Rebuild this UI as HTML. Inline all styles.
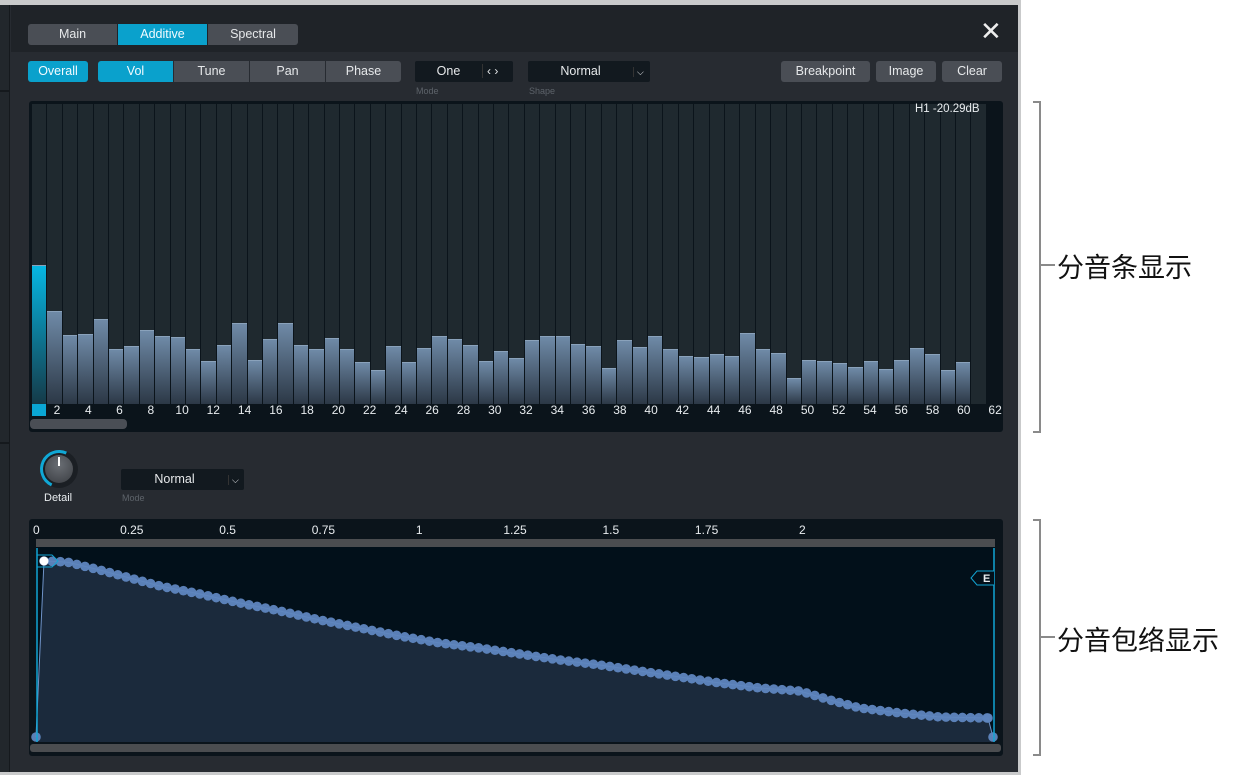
<!DOCTYPE html>
<html><head><meta charset="utf-8"><style>
*{margin:0;padding:0;box-sizing:border-box}
body{width:1237px;height:777px;background:#fff;position:relative;overflow:hidden;font-family:"Liberation Sans",Arial,sans-serif;color:#e8ecef;font-size:12px}
.win{position:absolute;left:0;top:0;width:1021px;height:775px;background:#c9cacb}
.inner{position:absolute;left:0;top:5px;width:1018px;height:767px;background:#272b31}
.strip{position:absolute;left:0;top:0;width:10px;height:767px;background:#22272c;border-right:1px solid #15191d}
.hdr{position:absolute;left:11px;top:0;right:0;height:47px;background:#1f2328}
.btn{position:absolute;height:21px;line-height:21px;text-align:center;background:#4a4e55;color:#e6e8ea;font-size:12.5px;border-radius:2px}
.on{background:#0aa1cc;color:#f2fbff}
.dd{position:absolute;height:21px;line-height:21px;text-align:center;background:#12191f;color:#e6e8ea;font-size:12.5px;border-radius:2px}
.lbl{position:absolute;font-size:9px;color:#5d636a}
.panel{position:absolute;background:#0b141b;border-radius:3px}
.ann{position:absolute;font-family:"Liberation Sans","Noto Sans CJK SC",sans-serif;font-size:27px;color:#111}
.br{position:absolute;border:2px solid #8a8a8a;border-left:none;width:8px}
.tick{position:absolute;height:2px;background:#8a8a8a;width:14px}
</style></head><body>
<div class="win"><div class="inner">
<div class="strip"></div>
<div style="position:absolute;left:0;top:85px;width:10px;height:2px;background:#15191d"></div>
<div style="position:absolute;left:0;top:437px;width:10px;height:2px;background:#15191d"></div>
<div class="hdr"></div>
</div></div>
<div class="btn" style="left:28px;top:24px;width:89px;border-radius:3px 0 0 3px">Main</div>
<div class="btn on" style="left:118px;top:24px;width:89px;border-radius:0">Additive</div>
<div class="btn" style="left:208px;top:24px;width:90px;border-radius:0 3px 3px 0">Spectral</div>
<div style="position:absolute;left:980px;top:16px;font-size:26px;color:#eee;font-weight:300">✕</div>

<div class="btn on" style="left:28px;top:61px;width:60px;border-radius:3px">Overall</div>
<div class="btn on" style="left:98px;top:61px;width:75px;border-radius:3px 0 0 3px">Vol</div>
<div class="btn" style="left:174px;top:61px;width:75px;border-radius:0">Tune</div>
<div class="btn" style="left:250px;top:61px;width:75px;border-radius:0">Pan</div>
<div class="btn" style="left:326px;top:61px;width:75px;border-radius:0 3px 3px 0">Phase</div>
<div class="dd" style="left:415px;top:61px;width:98px;text-align:left"><span style="display:inline-block;width:67px;text-align:center">One</span><span style="border-left:1px solid #333;padding-left:4px;font-size:12px">‹ ›</span></div>
<div class="lbl" style="left:416px;top:86px">Mode</div>
<div class="dd" style="left:528px;top:61px;width:122px;text-align:left"><span style="display:inline-block;width:105px;text-align:center">Normal</span><span style="border-left:1px solid #333;padding-left:3px;font-size:9px">⌵</span></div>
<div class="lbl" style="left:529px;top:86px">Shape</div>
<div class="btn" style="left:781px;top:61px;width:89px;border-radius:3px">Breakpoint</div>
<div class="btn" style="left:876px;top:61px;width:60px;border-radius:3px">Image</div>
<div class="btn" style="left:942px;top:61px;width:60px;border-radius:3px">Clear</div>

<div class="panel" style="left:29px;top:101px;width:974px;height:331px"></div>
<div id="bars"></div>
<div style="position:absolute;left:915px;top:103px;font-size:11.5px;color:#e8ecef">H1 -20.29dB</div>
<div style="position:absolute;left:30px;top:419px;width:97px;height:10px;background:#4a4e55;border-radius:4px"></div>

<div style="position:absolute;left:40px;top:450px;width:38px;height:38px;border-radius:50%;background:#1b1f24;border:3px solid #1b1f24;border-left-color:#10a8d6;border-top-color:#10a8d6;transform:rotate(-20deg)"></div>
<div style="position:absolute;left:45px;top:455px;width:28px;height:28px;border-radius:50%;background:radial-gradient(circle at 50% 35%,#6a6e74,#3a3d42)"></div>
<div style="position:absolute;left:58px;top:457px;width:2px;height:9px;background:#fff"></div>
<div style="position:absolute;left:44px;top:492px;font-size:11px">Detail</div>
<div class="dd" style="left:121px;top:469px;width:123px;text-align:left"><span style="display:inline-block;width:107px;text-align:center">Normal</span><span style="border-left:1px solid #333;padding-left:3px;font-size:9px">⌵</span></div>
<div class="lbl" style="left:122px;top:493px">Mode</div>

<div class="panel" style="left:29px;top:519px;width:974px;height:237px"></div>
<div id="ruler"></div>
<div style="position:absolute;left:36px;top:539px;width:959px;height:8px;background:#4b4d50"></div>
<div style="position:absolute;left:36px;top:547px;width:959px;height:195px;background:#02101a"></div>
<div style="position:absolute;left:30px;top:744px;width:971px;height:8px;background:#4b4d50;border-radius:3px"></div>
<svg style="position:absolute;left:0;top:0" width="1021" height="777" id="env"></svg>

<div class="br" style="left:1033px;top:101px;height:332px"></div>
<div class="tick" style="left:1041px;top:264px"></div>
<div class="ann" style="left:1057px;top:246px">分音条显示</div>
<div class="br" style="left:1033px;top:519px;height:237px"></div>
<div class="tick" style="left:1041px;top:636px"></div>
<div class="ann" style="left:1057px;top:619px">分音包络显示</div>

<script>
var tops=[265,311,335,334,319,349,346,330,336,337,349,361,345,323,360,339,323,345,349,338,349,362,370,346,362,348,336,339,345,361,351,358,340,336,336,344,346,368,340,347,336,349,356,357,354,356,333,349,353,378,360,361,363,367,361,369,360,348,354,370,362,404];
var h='',w=15.4;
for(var i=0;i<62;i++){var x=32+i*w;
h+='<div style="position:absolute;left:'+x.toFixed(1)+'px;top:104px;width:'+(w-1).toFixed(1)+'px;height:300px;background:#1f292f"></div>';
var t=tops[i];var g=i==0?'linear-gradient(#06b6e2,#153a48)':'linear-gradient(#6f8aa7,#2c3846)';
if(t<404)h+='<div style="position:absolute;left:'+x.toFixed(1)+'px;top:'+t+'px;width:'+(w-1).toFixed(1)+'px;height:'+(404-t)+'px;background:'+g+';border-top:1px solid #8aa2bb"></div>';
if(i>0&&i%2==1){var c=57+(i-1)/2*31.27;h+='<div style="position:absolute;left:'+(c-15).toFixed(1)+'px;width:30px;text-align:center;top:403px;font-size:12px;color:#e8ecef">'+(i+1)+'</div>';}}
h+='<div style="position:absolute;left:32px;top:404px;width:14px;height:12px;background:#0aa6d4"></div>';
document.getElementById('bars').innerHTML=h;
var r='',lb=['0','0.25','0.5','0.75','1','1.25','1.5','1.75','2'];
for(var j=0;j<9;j++)r+='<div style="position:absolute;left:'+(36+j*95.8-20)+'px;width:40px;text-align:center;top:523px;font-size:12px">'+lb[j]+'</div>';
r=r.replace('left:16px;width:40px;text-align:center','left:33px;width:10px;text-align:left');
document.getElementById('ruler').innerHTML=r;
var k=[[44,561],[67,562],[100,570],[130,578],[160,586],[200,594],[240,603],[280,611],[320,620],[360,628],[400,636],[440,643],[480,648],[520,654],[560,660],[600,665],[640,671],[680,677],[720,683],[760,688],[800,691],[830,700],[860,708],[900,713],[940,717],[988,718]];
function yAt(x){for(var i=0;i<k.length-1;i++)if(x<=k[i+1][0]){var a=k[i],b=k[i+1];return a[1]+(b[1]-a[1])*(x-a[0])/(b[0]-a[0]);}return 718;}
var pts=[[36,737]];for(var x=44;x<=988;x+=8.2)pts.push([x,yAt(x)]);pts.push([988,718],[993,737]);
var s='<polygon points="'+pts.map(p=>p.join(',')).join(' ')+' 993,742 36,742" fill="#1b2a3c"/>';
s+='<polyline points="'+pts.map(p=>p.join(',')).join(' ')+'" fill="none" stroke="#6f93c8" stroke-width="1"/>';
pts.forEach(function(p){s+='<circle cx="'+p[0]+'" cy="'+p[1]+'" r="4.8" fill="#5f86bf" opacity="0.95"/>';});
s+='<line x1="37" y1="548" x2="37" y2="742" stroke="#12a5d4" stroke-width="1.5"/><line x1="994" y1="548" x2="994" y2="742" stroke="#12a5d4" stroke-width="1.5"/>';
s+='<path d="M37 555 H52 L58 561 L52 567 H37" fill="none" stroke="#12a5d4"/><circle cx="44" cy="561" r="4.5" fill="#fff"/>';
s+='<path d="M994 571 H977 L971 578 L977 585 H994" fill="#02101a" stroke="#12a5d4"/><text x="983" y="582" font-size="11" font-weight="bold" fill="#e8ecef" font-family="Liberation Sans">E</text>';
document.getElementById('env').innerHTML=s;
</script>
</body></html>
